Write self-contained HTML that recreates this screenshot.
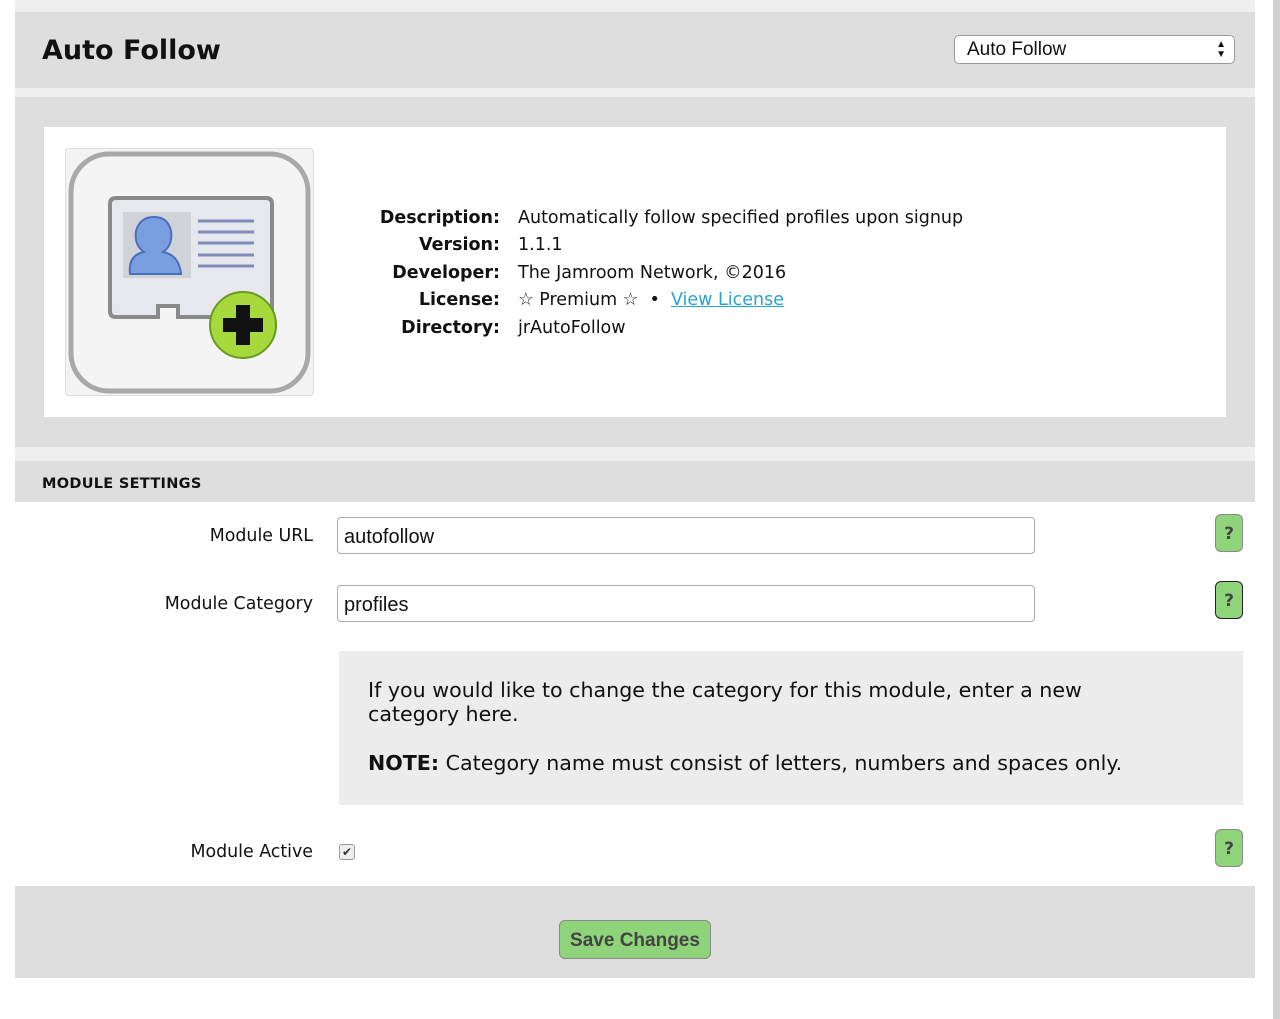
<!DOCTYPE html>
<html><head><meta charset="utf-8"><style>
*{margin:0;padding:0;box-sizing:border-box}
body{width:1280px;height:1019px;background:#fff;font-family:"DejaVu Sans","Liberation Sans",sans-serif;color:#111;position:relative;overflow:hidden}
.a{position:absolute}
.sb{left:1273px;top:0;width:7px;height:1019px;background:#d0d0d0}
.lbl{font-size:17.4px;text-align:right;width:300px;left:13px}
.inp{left:337px;width:698px;height:37px;border:1px solid #aaa;border-radius:4px;background:#fff;font-family:"Liberation Sans",sans-serif;font-size:20px;padding:8px 6px 4px}
.q{left:1215px;width:28px;height:38px;background:#8fd37a;border:1px solid #888;border-radius:6px;font-weight:bold;font-size:17px;color:#444;text-align:center;line-height:38px}
.k{font-weight:bold;text-align:right;width:160px;left:340px;font-size:17.5px}
.v{left:518px;font-size:17.5px}
</style></head><body>
<div class="a sb"></div>
<div class="a" style="left:15px;top:0;width:1240px;height:12px;background:#efefef"></div>
<div class="a" style="left:15px;top:12px;width:1240px;height:76px;background:#dedede"></div>
<div class="a" style="left:42px;top:35px;font-size:27px;font-weight:bold">Auto Follow</div>
<div class="a" style="left:954px;top:35px;width:281px;height:29px;background:#fff;border:1px solid #999;border-radius:5px;font-size:19px;padding:3px 12px;font-family:'Liberation Sans',sans-serif">Auto Follow<span style="position:absolute;right:8px;top:4px;font-size:10px;line-height:10px">▲<br>▼</span></div>
<div class="a" style="left:15px;top:88px;width:1240px;height:9px;background:#efefef"></div>
<div class="a" style="left:15px;top:97px;width:1240px;height:350px;background:#dedede"></div>
<div class="a" style="left:44px;top:127px;width:1182px;height:290px;background:#fff"></div>
<div class="a" style="left:65px;top:148px;width:249px;height:248px;background:#f3f3f3;border:1px solid #ddd;border-radius:4px">
<svg width="249" height="248" viewBox="0 0 249 248">
<rect x="5" y="5" width="237" height="237" rx="38" fill="#f4f4f4" stroke="#a8a8a8" stroke-width="5"/>
<path d="M44 55 Q44 49 50 49 H200 Q206 49 206 55 V162 Q206 168 200 168 H112 V157 H92 V168 H50 Q44 168 44 162Z" fill="#e6e8ee" stroke="#8a8a8a" stroke-width="4"/>
<rect x="57" y="63" width="68" height="66" fill="#cfd2d6"/>
<path d="M64 125 Q62 106 78 103 Q68 96 70 82 Q74 68 88 68 Q102 68 105 82 Q107 96 97 103 Q113 106 115 125Z" fill="#7a9fe0" stroke="#4b6fc0" stroke-width="2"/>
<g stroke="#7f8bb8" stroke-width="3"><line x1="132" y1="72" x2="188" y2="72"/><line x1="132" y1="83" x2="188" y2="83"/><line x1="132" y1="94" x2="188" y2="94"/><line x1="132" y1="106" x2="188" y2="106"/><line x1="132" y1="117" x2="188" y2="117"/></g>
<circle cx="177" cy="176" r="33" fill="#a7d83c" stroke="#6a9a22" stroke-width="2"/>
<path d="M170 156 H184 V169 H197 V183 H184 V196 H170 V183 H157 V169 H170Z" fill="#111"/>
</svg></div>
<div class="a k" style="top:208px">Description:</div><div class="a v" style="top:208px">Automatically follow specified profiles upon signup</div>
<div class="a k" style="top:235px">Version:</div><div class="a v" style="top:235px">1.1.1</div>
<div class="a k" style="top:263px">Developer:</div><div class="a v" style="top:263px">The Jamroom Network, ©2016</div>
<div class="a k" style="top:290px">License:</div><div class="a v" style="top:290px">☆ Premium ☆ &nbsp;• &nbsp;<span style="color:#2aa3d0;text-decoration:underline">View License</span></div>
<div class="a k" style="top:318px">Directory:</div><div class="a v" style="top:318px">jrAutoFollow</div>
<div class="a" style="left:15px;top:447px;width:1240px;height:14px;background:#efefef"></div>
<div class="a" style="left:15px;top:461px;width:1240px;height:41px;background:#dedede"></div>
<div class="a" style="left:42px;top:476px;font-size:14.5px;font-weight:bold;letter-spacing:0.3px">MODULE SETTINGS</div>
<div class="a lbl" style="top:526px">Module URL</div>
<div class="a inp" style="top:517px">autofollow</div>
<div class="a q" style="top:514px">?</div>
<div class="a lbl" style="top:594px">Module Category</div>
<div class="a inp" style="top:585px">profiles</div>
<div class="a q" style="top:581px;border-color:#222">?</div>
<div class="a" style="left:339px;top:651px;width:904px;height:154px;background:#ececec;padding:27px 140px 27px 29px;font-size:20.6px;line-height:24px">If you would like to change the category for this module, enter a new category here.<div style="margin-top:25px;margin-right:-120px"><b>NOTE:</b> Category name must consist of letters, numbers and spaces only.</div></div>
<div class="a lbl" style="top:842px">Module Active</div>
<div class="a" style="left:339px;top:844px;width:16px;height:16px;border:1px solid #999;border-radius:3px;background:#eee;font-size:12px;line-height:14px;text-align:center;color:#333">✔</div>
<div class="a q" style="top:829px">?</div>
<div class="a" style="left:15px;top:886px;width:1240px;height:92px;background:#dedede"></div>
<div class="a" style="left:559px;top:920px;width:152px;height:39px;background:#8fd37a;border:1px solid #888;border-radius:6px;font-weight:bold;font-size:19px;color:#444;text-align:center;line-height:40px;font-family:'Liberation Sans',sans-serif">Save Changes</div>
</body></html>
